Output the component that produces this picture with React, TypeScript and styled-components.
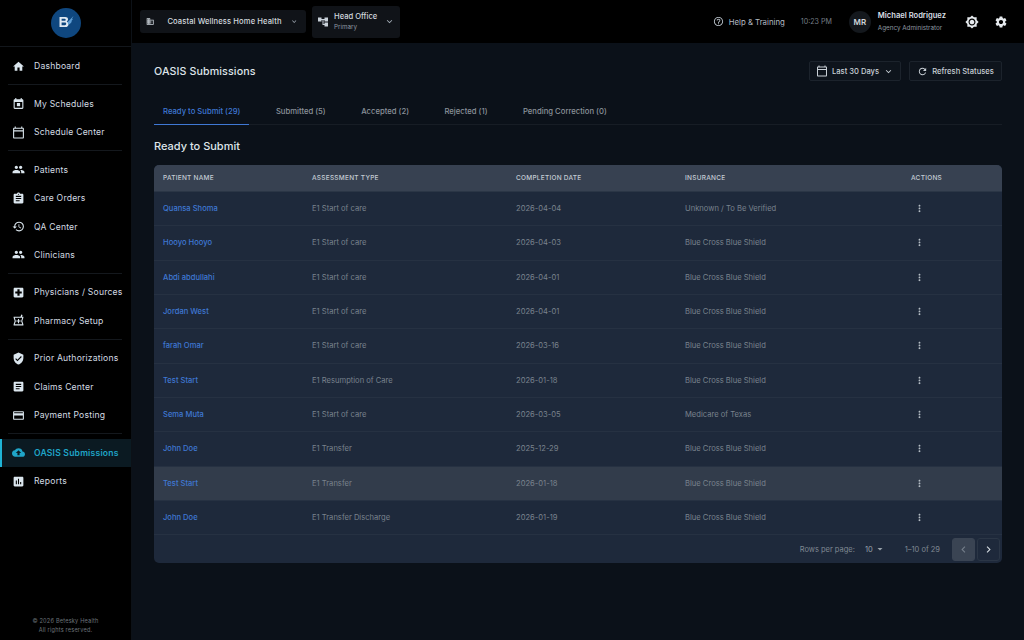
import React from "react";
import styled, { createGlobalStyle } from "styled-components";
import {
  MdHome,
  MdOutlineCalendarToday,
  MdPeople,
  MdAssignment,
  MdHistory,
  MdLocalHospital,
  MdOutlineLocalPharmacy,
  MdVerifiedUser,
  MdArticle,
  MdCreditCard,
  MdCloudUpload,
  MdAssessment,
  MdDomain,
  MdAccountTree,
  MdHelpOutline,
  MdBrightness7,
  MdSettings,
  MdExpandMore,
  MdRefresh,
  MdMoreVert,
  MdArrowDropDown,
  MdChevronLeft,
  MdChevronRight,
} from "react-icons/md";

const GlobalStyle = createGlobalStyle`
  html, body { margin: 0; padding: 0; height: 100%; background: #0b1119; }
  body { font-family: Inter, "Liberation Sans", sans-serif; overflow: hidden; }
  * { box-sizing: border-box; }
`;

// calendar with a square in the middle, the md set only has it bottom right
const ScheduleIcon = ({ size }: { size: number }) => (
  <svg width={size} height={size} viewBox="0 0 24 24" fill="currentColor">
    <path d="M19 4h-1V2h-2v2H8V2H6v2H5c-1.100 0-2 .9-2 2v14c0 1.100.9 2 2 2h14c1.100 0 2-.9 2-2V6c0-1.100-.9-2-2-2zm0 16H5V9h14v11z" />
    <path d="M9 11h6v6H9z" />
  </svg>
);

const navGroups = [
  [{ label: "Dashboard", icon: MdHome }],
  [
    { label: "My Schedules", icon: ScheduleIcon },
    { label: "Schedule Center", icon: MdOutlineCalendarToday },
  ],
  [
    { label: "Patients", icon: MdPeople },
    { label: "Care Orders", icon: MdAssignment },
    { label: "QA Center", icon: MdHistory },
    { label: "Clinicians", icon: MdPeople },
  ],
  [
    { label: "Physicians / Sources", icon: MdLocalHospital },
    { label: "Pharmacy Setup", icon: MdOutlineLocalPharmacy },
  ],
  [
    { label: "Prior Authorizations", icon: MdVerifiedUser },
    { label: "Claims Center", icon: MdArticle },
    { label: "Payment Posting", icon: MdCreditCard },
  ],
  [
    { label: "OASIS Submissions", icon: MdCloudUpload, active: true },
    { label: "Reports", icon: MdAssessment },
  ],
];

const tabs = [
  "Ready to Submit (29)",
  "Submitted (5)",
  "Accepted (2)",
  "Rejected (1)",
  "Pending Correction (0)",
];

const rows = [
  ["Quansa Shoma", "E1 Start of care", "2026-04-04", "Unknown / To Be Verified"],
  ["Hooyo Hooyo", "E1 Start of care", "2026-04-03", "Blue Cross Blue Shield"],
  ["Abdi abdullahi", "E1 Start of care", "2026-04-01", "Blue Cross Blue Shield"],
  ["Jordan West", "E1 Start of care", "2026-04-01", "Blue Cross Blue Shield"],
  ["farah Omar", "E1 Start of care", "2026-03-16", "Blue Cross Blue Shield"],
  ["Test Start", "E1 Resumption of Care", "2026-01-18", "Blue Cross Blue Shield"],
  ["Sema Muta", "E1 Start of care", "2026-03-05", "Medicare of Texas"],
  ["John Doe", "E1 Transfer", "2025-12-29", "Blue Cross Blue Shield"],
  ["Test Start", "E1 Transfer", "2026-01-18", "Blue Cross Blue Shield"],
  ["John Doe", "E1 Transfer Discharge", "2026-01-19", "Blue Cross Blue Shield"],
];

function App() {
  return (
    <Shell>
      <GlobalStyle />
      <Sidebar>
        <LogoBar>
          <LogoCircle>
            <svg width="20" height="20" viewBox="0 0 20 20">
              <path
                fillRule="evenodd"
                d="M3.500 4h5.700c1.800 0 2.800.9 2.800 2.300 0 1-.5 1.700-1.300 2.100 1.200.4 1.900 1.300 1.900 2.500 0 2-1.300 3.100-3.300 3.100H3.500zM5.600 5.800v1.900h3c.7 0 1.100-.4 1.100-1s-.4-.9-1.100-.9zM5.600 9.400v2.800h3.200c.9 0 1.400-.5 1.400-1.400s-.5-1.400-1.400-1.400z"
                fill="#dfe8f1"
              />
              <path d="M11.500 9.200 17.500 3l-1.700 3.200 1.300-.5-2 2.900 1-.2-2.500 2.800-1.200.1z" fill="#5f9fd6" />
            </svg>
          </LogoCircle>
        </LogoBar>
        <Nav>
          {navGroups.map((group, i) => (
            <NavGroup key={i} $last={i === navGroups.length - 1}>
              {group.map((item) => (
                <NavItem key={item.label} $active={item.active}>
                  <NavIcon $active={item.active}>
                    <item.icon size={13} />
                  </NavIcon>
                  {item.label}
                </NavItem>
              ))}
            </NavGroup>
          ))}
        </Nav>
        <Copyright>
          © 2026 Betesky Health
          <br />
          All rights reserved.
        </Copyright>
      </Sidebar>

      <Content>
        <TopBar>
          <OrgSelect>
            <MdDomain size={13} color="#d0d7de" />
            <OrgName>Coastal Wellness Home Health</OrgName>
            <MdExpandMore size={13} color="#a3acb6" />
          </OrgSelect>
          <BranchSelect>
            <MdAccountTree size={12} color="#c8d0d8" />
            <BranchText>
              <BranchName>Head Office</BranchName>
              <BranchSub>Primary</BranchSub>
            </BranchText>
            <MdExpandMore size={11} color="#a3acb6" />
          </BranchSelect>
          <TopRight>
            <HelpLink>
              <MdHelpOutline size={11} />
              Help &amp; Training
            </HelpLink>
            <Clock>10:23 PM</Clock>
            <UserBlock>
              <Avatar>MR</Avatar>
              <div>
                <UserName>Michael Rodriguez</UserName>
                <UserRole>Agency Administrator</UserRole>
              </div>
            </UserBlock>
            <TopIcons>
              <MdBrightness7 size={14} color="#e6eaee" />
              <MdSettings size={14} color="#e6eaee" />
            </TopIcons>
          </TopRight>
        </TopBar>

        <Main>
          <PageHeader>
            <PageTitle>OASIS Submissions</PageTitle>
            <HeaderActions>
              <GhostButton $w={92}>
                <MdOutlineCalendarToday size={12} />
                Last 30 Days
                <MdExpandMore size={11} />
              </GhostButton>
              <GhostButton $w={93}>
                <MdRefresh size={11} />
                Refresh Statuses
              </GhostButton>
            </HeaderActions>
          </PageHeader>

          <Tabs>
            {tabs.map((tab, i) => (
              <Tab key={tab} $active={i === 0}>
                {tab}
              </Tab>
            ))}
          </Tabs>

          <SectionTitle>Ready to Submit</SectionTitle>

          <TableCard>
            <HeadRow>
              <span>Patient Name</span>
              <span>Assessment Type</span>
              <span>Completion Date</span>
              <span>Insurance</span>
              <span>Actions</span>
            </HeadRow>
            {rows.map((row, i) => (
              <Row key={i} $hover={i === 8}>
                <PatientLink>{row[0]}</PatientLink>
                <span>{row[1]}</span>
                <span>{row[2]}</span>
                <span>{row[3]}</span>
                <ActionCell>
                  <MdMoreVert size={11} />
                </ActionCell>
              </Row>
            ))}
            <Footer>
              <span>Rows per page:</span>
              <PerPage>
                10
                <MdArrowDropDown size={12} />
              </PerPage>
              <RangeText>1–10 of 29</RangeText>
              <Pager>
                <PagerButton $disabled>
                  <MdChevronLeft size={13} />
                </PagerButton>
                <PagerButton>
                  <MdChevronRight size={13} />
                </PagerButton>
              </Pager>
            </Footer>
          </TableCard>
        </Main>
      </Content>
    </Shell>
  );
}

const Shell = styled.div`
  display: flex;
  width: 1024px;
  height: 640px;
  overflow: hidden;
`;

const Sidebar = styled.aside`
  width: 132px;
  flex: none;
  display: flex;
  flex-direction: column;
  background: #000;
  border-right: 1px solid #0c1117;
`;

const LogoBar = styled.div`
  height: 47px;
  flex: none;
  display: flex;
  align-items: center;
  justify-content: center;
  padding-bottom: 1px;
  border-bottom: 1px solid #12161b;
`;

const LogoCircle = styled.div`
  width: 30px;
  height: 30px;
  border-radius: 50%;
  background: #0f477f;
  display: flex;
  align-items: center;
  justify-content: center;
`;

const Nav = styled.nav`
  flex: 1;
  padding-top: 5px;
`;

const NavGroup = styled.div<{ $last?: boolean }>`
  position: relative;
  padding-bottom: ${(p) => (p.$last ? "0" : "9.2px")};
  &::after {
    content: "";
    display: ${(p) => (p.$last ? "none" : "block")};
    position: absolute;
    left: 8px;
    right: 9px;
    bottom: 4.5px;
    height: 1px;
    background: #14181d;
  }
`;

const NavItem = styled.div<{ $active?: boolean }>`
  position: relative;
  height: 28.4px;
  display: flex;
  align-items: center;
  font-size: 8.6px;
  font-weight: ${(p) => (p.$active ? 600 : 400)};
  letter-spacing: 0.2px;
  color: ${(p) => (p.$active ? "#1fa5c8" : "#d4dce3")};
  background: ${(p) => (p.$active ? "#0b1a22" : "transparent")};
  &::before {
    content: "";
    display: ${(p) => (p.$active ? "block" : "none")};
    position: absolute;
    left: 0;
    top: 0;
    bottom: 0;
    width: 2px;
    background: #1fb3d6;
  }
`;

const NavIcon = styled.span<{ $active?: boolean }>`
  width: 34px;
  padding-left: 12px;
  display: flex;
  align-items: center;
  color: ${(p) => (p.$active ? "#1fa5c8" : "#dbe6ee")};
`;

const Copyright = styled.div`
  padding-bottom: 5px;
  text-align: center;
  font-size: 5.6px;
  line-height: 9px;
  letter-spacing: 0.2px;
  color: #6d747b;
`;

const Content = styled.div`
  flex: 1;
  min-width: 0;
  display: flex;
  flex-direction: column;
`;

const TopBar = styled.header`
  height: 43px;
  flex: none;
  display: flex;
  align-items: center;
  padding: 0 16px 0 8px;
  background: #000;
`;

const OrgSelect = styled.div`
  width: 166px;
  height: 23px;
  display: flex;
  align-items: center;
  gap: 8px;
  padding: 0 8px 0 6px;
  background: #101318;
  border-radius: 3px;
`;

const OrgName = styled.span`
  flex: 1;
  padding-left: 5px;
  font-size: 7.6px;
  font-weight: 500;
  letter-spacing: 0.1px;
  color: #d3d9df;
  white-space: nowrap;
`;

const BranchSelect = styled.div`
  width: 88px;
  height: 32px;
  margin-left: 6px;
  display: flex;
  align-items: center;
  gap: 5px;
  padding: 0 5px 0 5px;
  background: #101318;
  border-radius: 3px;
`;

const BranchText = styled.div`
  flex: 1;
`;

const BranchName = styled.div`
  font-size: 7.6px;
  font-weight: 500;
  line-height: 11px;
  color: #d3d9df;
`;

const BranchSub = styled.div`
  font-size: 6.3px;
  line-height: 11px;
  color: #8f98a1;
`;

const TopRight = styled.div`
  margin-left: auto;
  display: flex;
  align-items: center;
`;

const HelpLink = styled.div`
  display: flex;
  align-items: center;
  gap: 5px;
  font-size: 7.8px;
  color: #b4bcc4;
`;

const Clock = styled.div`
  margin-left: 16px;
  font-size: 7.1px;
  color: #757d85;
`;

const UserBlock = styled.div`
  margin-left: 17px;
  display: flex;
  align-items: center;
  gap: 7px;
`;

const Avatar = styled.div`
  width: 22px;
  height: 22px;
  border-radius: 50%;
  background: #14181d;
  display: flex;
  align-items: center;
  justify-content: center;
  font-size: 8px;
  font-weight: 600;
  color: #cfd5db;
`;

const UserName = styled.div`
  font-size: 7.6px;
  font-weight: 600;
  line-height: 13px;
  color: #d9dfe5;
`;

const UserRole = styled.div`
  font-size: 6.3px;
  line-height: 13px;
  color: #8f98a1;
`;

const TopIcons = styled.div`
  margin-left: 19px;
  display: flex;
  align-items: center;
  gap: 15px;
`;

const Main = styled.main`
  flex: 1;
  padding: 0 22px;
  background: #0b1119;
`;

const PageHeader = styled.div`
  height: 56px;
  display: flex;
  align-items: center;
  justify-content: space-between;
`;

const PageTitle = styled.h1`
  margin: 0;
  font-size: 10.7px;
  font-weight: 500;
  letter-spacing: 0.1px;
  color: #dfe5ea;
`;

const HeaderActions = styled.div`
  display: flex;
  gap: 8px;
`;

const GhostButton = styled.div<{ $w: number }>`
  width: ${(p) => p.$w}px;
  height: 20px;
  display: flex;
  align-items: center;
  justify-content: center;
  gap: 4px;
  font-size: 7.6px;
  font-weight: 500;
  color: #c9d0d6;
  background: #0e141c;
  border: 1px solid #1c232c;
  border-radius: 2px;
`;

const Tabs = styled.div`
  height: 26px;
  display: flex;
  border-bottom: 1px solid #171d25;
`;

const Tab = styled.div<{ $active?: boolean }>`
  height: 26px;
  display: flex;
  align-items: center;
  padding: 0 9px;
  margin-right: 17.5px;
  font-size: 7.7px;
  font-weight: 500;
  color: ${(p) => (p.$active ? "#3f78d4" : "#8b939b")};
  border-bottom: 1.5px solid ${(p) => (p.$active ? "#3f78d4" : "transparent")};
`;

const SectionTitle = styled.h2`
  margin: 14px 0 0;
  height: 26px;
  font-size: 11px;
  font-weight: 500;
  line-height: 14px;
  color: #dfe5ea;
`;

const TableCard = styled.div`
  width: 848px;
  border-radius: 5px;
  overflow: hidden;
  background: #1e293b;
`;

const columns = "149px 204px 169px 226px 100px";

const HeadRow = styled.div`
  height: 27px;
  display: grid;
  grid-template-columns: ${columns};
  align-items: center;
  padding-left: 9px;
  font-size: 6.5px;
  font-weight: 500;
  letter-spacing: 0.25px;
  text-transform: uppercase;
  color: #c4ccd4;
  background: #374151;
  border-bottom: 1px solid #2b3646;
`;

const Row = styled.div<{ $hover?: boolean }>`
  height: 34.33px;
  display: grid;
  grid-template-columns: ${columns};
  align-items: center;
  padding-left: 9px;
  font-size: 7.6px;
  color: #79828d;
  background: ${(p) => (p.$hover ? "#323c4b" : "#1e293b")};
  border-bottom: 1px solid #263142;
`;

const PatientLink = styled.span`
  color: #3f78d4;
  font-weight: 500;
`;

const ActionCell = styled.span`
  display: flex;
  padding-left: 3px;
  color: #b4bcc4;
`;

const Footer = styled.div`
  height: 28px;
  display: flex;
  align-items: center;
  justify-content: flex-end;
  padding-right: 2px;
  font-size: 7.5px;
  color: #7f8892;
`;

const PerPage = styled.span`
  display: flex;
  align-items: center;
  gap: 1px;
  margin-left: 10px;
  color: #98a1aa;
`;

const RangeText = styled.span`
  margin-left: 19px;
`;

const Pager = styled.div`
  display: flex;
  gap: 2px;
  margin-left: 12px;
`;

const PagerButton = styled.div<{ $disabled?: boolean }>`
  width: 23px;
  height: 23px;
  display: flex;
  align-items: center;
  justify-content: center;
  border-radius: 3px;
  color: ${(p) => (p.$disabled ? "#747e8a" : "#d4dae0")};
  background: ${(p) => (p.$disabled ? "#3a4453" : "transparent")};
  border: 1px solid ${(p) => (p.$disabled ? "#3a4453" : "#2b3646")};
`;

export default App;
